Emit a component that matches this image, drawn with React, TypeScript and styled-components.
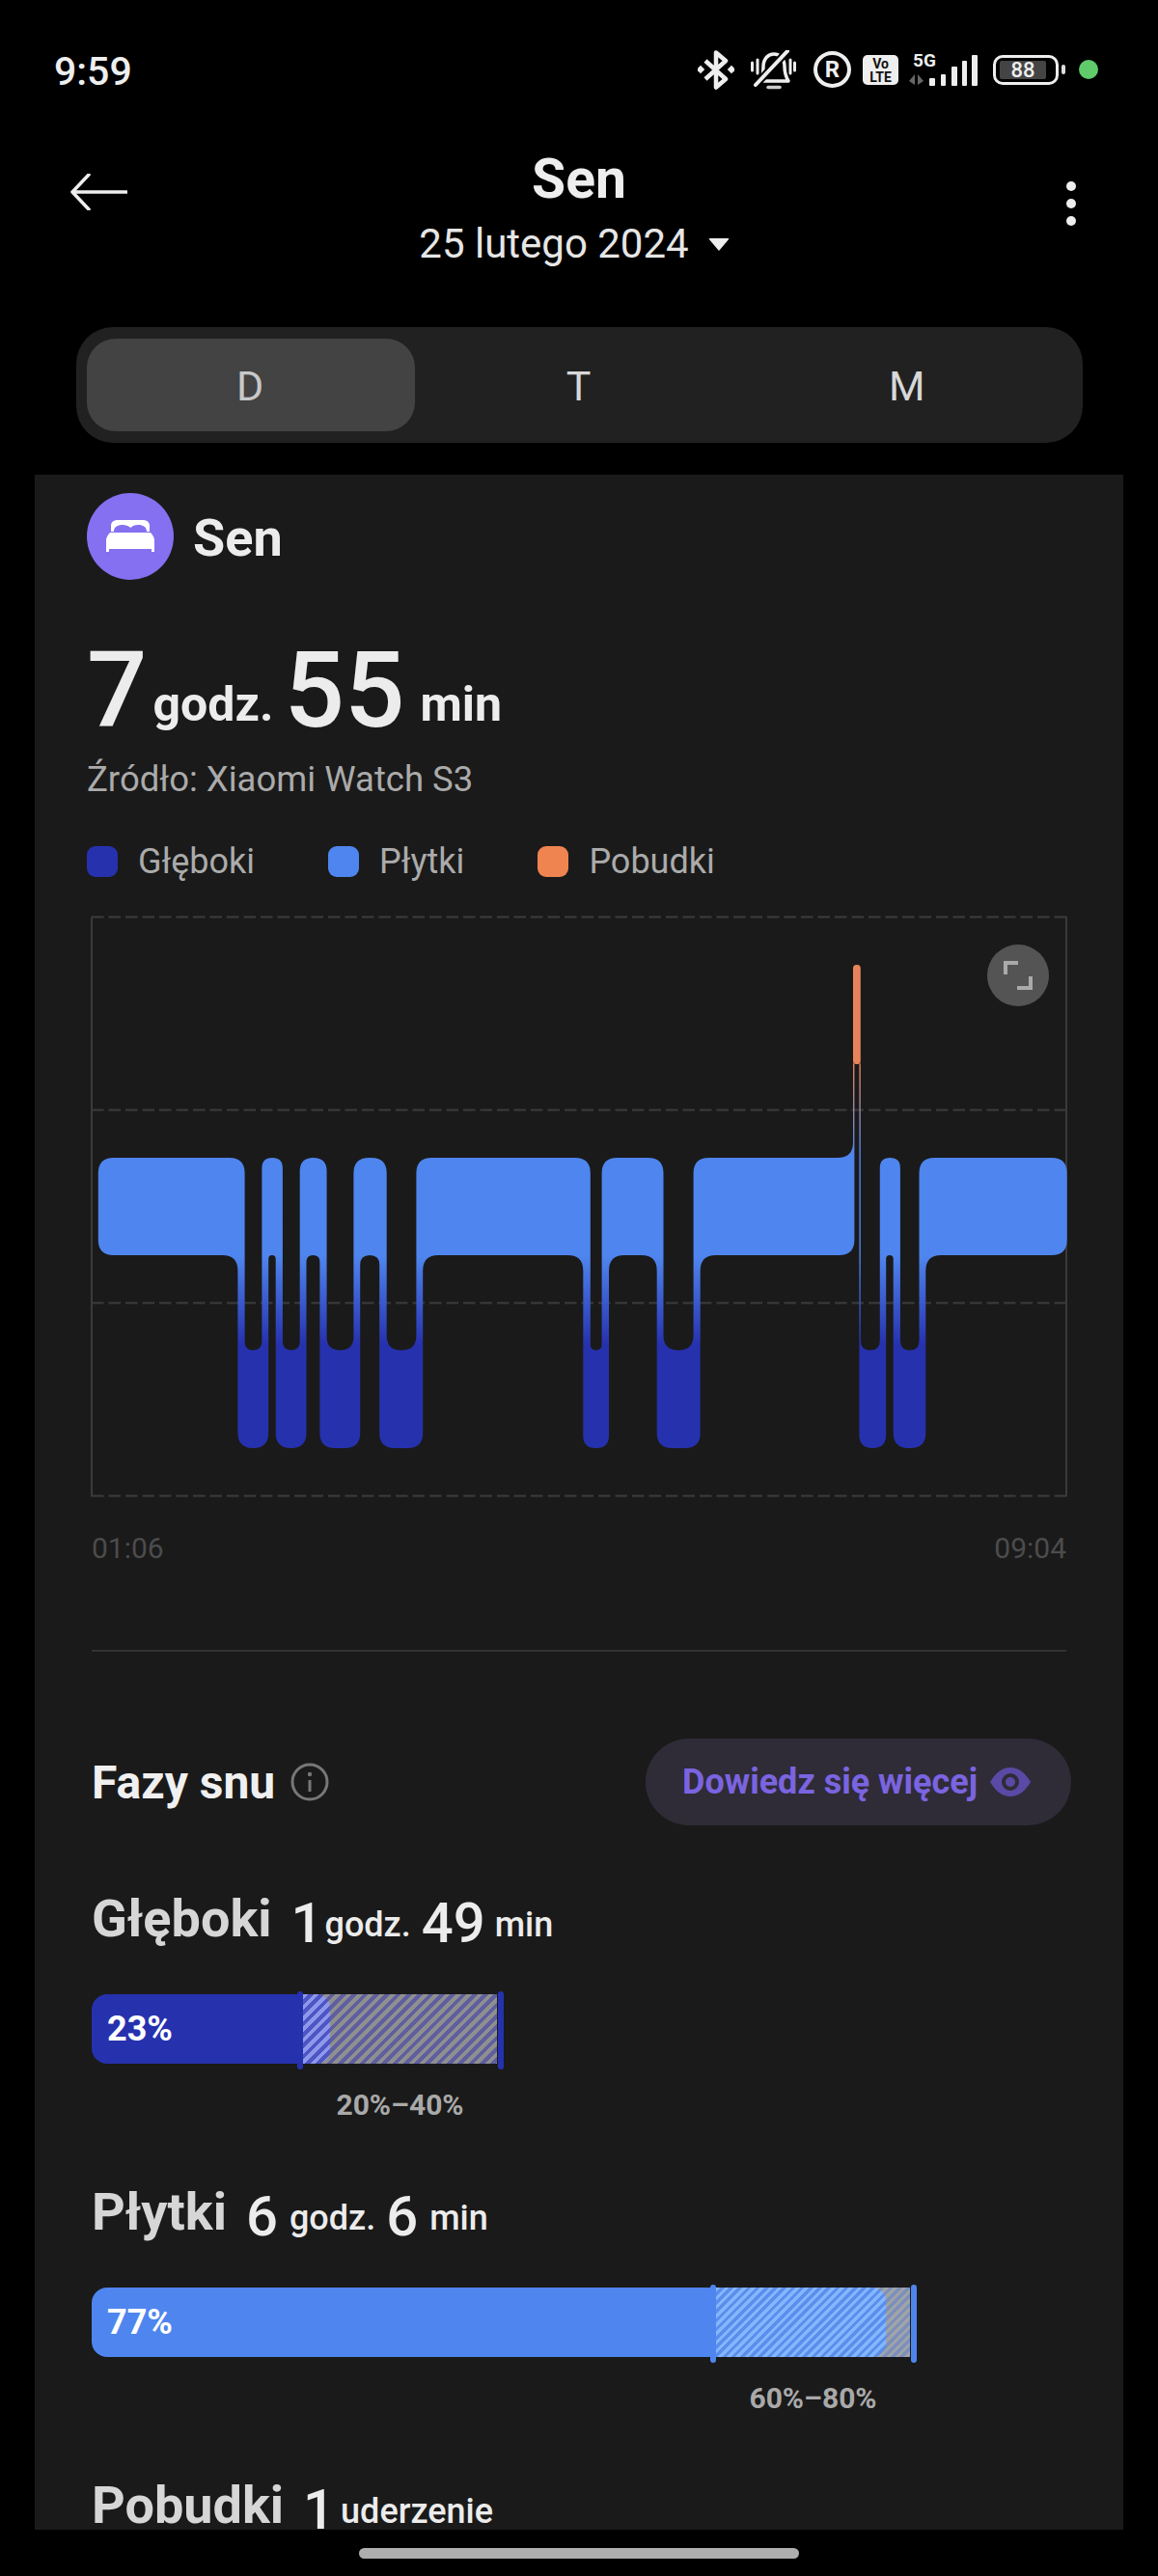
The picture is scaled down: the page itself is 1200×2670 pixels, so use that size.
import styled, { createGlobalStyle } from "styled-components"

const GlobalStyle = createGlobalStyle`
    html, body {
        margin: 0;
        background: #000;
        font-family: Roboto, "Noto Sans", sans-serif;
    }
`
const Page = styled.div`
    width: 1200px;
    height: 2670px;
    overflow: hidden;
    background: #000;
    color: #ececec;
`

/* status bar */
const StatusBar = styled.div`
    display: flex;
    align-items: center;
    height: 44px;
    padding: 50px 62px 0 56px;
`
const Clock = styled.div`
    padding-top: 3px;
    font-size: 41px;
    font-weight: 500;
    color: #eee;
    margin-right: auto;
`
const StatusSvg = styled.svg<{ $ml?: number }>`
    display: block;
    margin-left: ${p => p.$ml ?? 0}px;
`
const RoamBadge = styled.div`
    width: 39px;
    height: 38px;
    margin-left: 18px;
    box-sizing: border-box;
    border: 4px solid #eee;
    border-radius: 50%;
    font-size: 24px;
    font-weight: 700;
    line-height: 30px;
    text-align: center;
    color: #eee;
`
const VolteBadge = styled.div`
    width: 37px;
    height: 31px;
    margin-left: 12px;
    background: #eee;
    border-radius: 5px;
    color: #111;
    font-size: 14px;
    font-weight: 700;
    line-height: 14px;
    text-align: center;
    padding-top: 2px;
    box-sizing: border-box;
`
const SignalWrap = styled.div`
    position: relative;
    width: 72px;
    height: 33px;
    margin-left: 10px;
`
const FiveG = styled.span`
    position: absolute;
    left: 5px;
    top: -3px;
    font-size: 19px;
    font-weight: 700;
    line-height: 20px;
    color: #eee;
`
const Battery = styled.div`
    width: 68px;
    height: 31px;
    margin-left: 16px;
    box-sizing: border-box;
    border: 3px solid #eee;
    border-radius: 10px;
    padding: 3px 10px 3px 4px;
`
const BatteryFill = styled.div`
    height: 100%;
    background: #444;
    border-radius: 2px;
    font-size: 22px;
    font-weight: 500;
    line-height: 19px;
    text-align: center;
    color: #eee;
`
const BatteryTip = styled.div`
    width: 4px;
    height: 10px;
    margin-left: 3px;
    background: #ddd;
    border-radius: 2px;
`
const GreenDot = styled.div`
    width: 20px;
    height: 20px;
    margin-left: 14px;
    background: #5fcb6a;
    border-radius: 50%;
`

/* header */
const Header = styled.div`
    display: grid;
    grid-template-columns: 1fr auto 1fr;
    padding-top: 62px;
    margin-bottom: 61px;
`
const BackIcon = styled.svg`
    display: block;
    margin: 24px 0 0 72px;
`
const TitleBlock = styled.div`
    text-align: center;
`
const PageTitle = styled.div`
    font-size: 57px;
    font-weight: 700;
    line-height: 60px;
    color: #eee;
`
const DateRow = styled.div`
    display: flex;
    align-items: center;
    gap: 20px;
    margin: 12px 10px 0 0;
    font-size: 42px;
    line-height: 50px;
    color: #e6e6e6;
`
const DateCaret = styled.div`
    width: 0;
    height: 0;
    border-left: 11px solid transparent;
    border-right: 11px solid transparent;
    border-top: 13px solid #eee;
    border-radius: 2px;
`
const MoreIcon = styled.svg`
    display: block;
    justify-self: end;
    margin: 32px 85px 0 0;
`

/* day / week / month */
const Segmented = styled.div`
    display: grid;
    grid-template-columns: repeat(3, 1fr);
    height: 120px;
    margin: 0 78px 33px 79px;
    padding: 12px 11px;
    box-sizing: border-box;
    background: #212121;
    border-radius: 38px;
`
const Tab = styled.div<{ $active?: boolean }>`
    display: flex;
    align-items: center;
    justify-content: center;
    padding: 2px 2px 0 0;
    font-size: 43px;
    color: ${p => (p.$active ? "#c8c8c8" : "#d8d8d8")};
    background: ${p => (p.$active ? "#434343" : "transparent")};
    border-radius: 30px;
`

/* card */
const Card = styled.div`
    height: 2130px;
    margin: 0 36px;
    padding: 19px 54px 0;
    box-sizing: border-box;
    overflow: hidden;
    background: #1a1a1a;
`
const CardHead = styled.div`
    display: flex;
    align-items: center;
    gap: 20px;
    height: 90px;
`
const SleepBadge = styled.div`
    display: flex;
    align-items: center;
    justify-content: center;
    width: 90px;
    height: 90px;
    background: #8470f0;
    border-radius: 50%;
`
const CardTitle = styled.div`
    padding-top: 3px;
    font-size: 54px;
    font-weight: 700;
    color: #ececec;
`
const BigRow = styled.div`
    height: 110px;
    margin-top: 60px;
    font-size: 50px;
    font-weight: 700;
    line-height: 110px;
    color: #ececec;
`
const BigNumber = styled.span<{ $gap: number }>`
    font-size: 110px;
    font-weight: 500;
    line-height: 1;
    vertical-align: -6px;
    margin-right: ${p => p.$gap}px;
`
const BigUnit = styled.span`
    margin-right: 11px;
`
const Source = styled.div`
    margin-top: 15px;
    font-size: 36.5px;
    line-height: 44px;
    color: #ababab;
`
const Legend = styled.div`
    display: flex;
    gap: 76px;
    height: 40px;
    margin-top: 43px;
`
const LegendItem = styled.div`
    display: flex;
    align-items: center;
    gap: 21px;
    font-size: 36px;
    color: #ababab;
`
const Swatch = styled.div<{ $color: string }>`
    width: 32px;
    height: 32px;
    background: ${p => p.$color};
    border-radius: 9px;
`

/* chart */
const ChartWrap = styled.div`
    position: relative;
    margin-top: 33px;
    height: 610px;
`
const ExpandButton = styled.div`
    position: absolute;
    left: 933px;
    top: 33px;
    display: flex;
    align-items: center;
    justify-content: center;
    width: 64px;
    height: 64px;
    background: #545454;
    border-radius: 50%;
`
const TimeRow = styled.div`
    display: flex;
    justify-content: space-between;
    margin-top: 29px;
    padding: 0 5px;
    font-size: 30px;
    line-height: 40px;
    color: #4c4c4c;
`
const Divider = styled.div`
    height: 2px;
    margin: 85px 5px 0;
    background: #333;
`

/* phases */
const PhasesHead = styled.div`
    display: flex;
    align-items: center;
    height: 90px;
    margin-top: 90px;
    padding-left: 5px;
`
const PhasesTitle = styled.div`
    font-size: 48px;
    font-weight: 700;
    color: #f0f0f0;
`
const InfoIcon = styled.svg`
    display: block;
    margin-left: 16px;
    margin-right: auto;
`
const MoreButton = styled.div`
    display: flex;
    align-items: center;
    gap: 13px;
    width: 441px;
    height: 90px;
    padding-left: 38px;
    box-sizing: border-box;
    background: #2f2c38;
    border-radius: 45px;
    font-size: 36px;
    font-weight: 700;
    color: #7b64e0;
`
const Phase = styled.div<{ $first?: boolean }>`
    margin-top: ${p => (p.$first ? 67 : 61)}px;
    padding-left: 5px;
`
const PhaseHead = styled.div`
    height: 60px;
    font-size: 36px;
    font-weight: 500;
    line-height: 60px;
    color: #ececec;
    white-space: nowrap;
`
const PhaseName = styled.span`
    font-size: 54px;
    font-weight: 700;
    color: #d6d6d6;
    margin-right: 20px;
`
const PhaseNumber = styled.span<{ $gap: number }>`
    font-size: 58px;
    font-weight: 500;
    line-height: 1;
    vertical-align: -6px;
    margin-right: ${p => p.$gap}px;
`
const PhaseUnit = styled.span`
    margin-right: 11px;
`
const BarTrack = styled.div`
    display: flex;
    height: 72px;
    margin-top: 48px;
`
const BarSolid = styled.div<{ $width: number; $color: string }>`
    width: ${p => p.$width}px;
    padding-left: 16px;
    box-sizing: border-box;
    background: ${p => p.$color};
    border-radius: 16px 0 0 16px;
    font-size: 36px;
    font-weight: 700;
    line-height: 72px;
    color: #fff;
`
const RangeBand = styled.div<{ $stripeA: string; $stripeB: string; $size: number; $edge: string }>`
    position: relative;
    width: 201px;
    background: repeating-linear-gradient(
        135deg,
        ${p => p.$stripeA} 0 ${p => p.$size / 2}px,
        ${p => p.$stripeB} ${p => p.$size / 2}px ${p => p.$size}px
    );
    &::before, &::after {
        content: "";
        position: absolute;
        top: -3px;
        bottom: -6px;
        width: 6px;
        background: ${p => p.$edge};
        border-radius: 3px;
    }
    &::before { left: -6px; }
    &::after { right: -7px; }
`
const RangeFill = styled.div<{ $width: number; $stripeA: string; $stripeB: string; $size: number }>`
    position: absolute;
    left: 0;
    top: 0;
    bottom: 0;
    width: ${p => p.$width}px;
    border-radius: 0 14px 14px 0;
    background: repeating-linear-gradient(
        135deg,
        ${p => p.$stripeA} 0 ${p => p.$size / 2}px,
        ${p => p.$stripeB} ${p => p.$size / 2}px ${p => p.$size}px
    );
`
const RangeLabel = styled.div<{ $left: number }>`
    width: 201px;
    margin: 23px 0 0 ${p => p.$left}px;
    font-size: 30px;
    font-weight: 700;
    line-height: 40px;
    text-align: center;
    color: #a9a9a9;
`
const HomeBar = styled.div`
    width: 456px;
    height: 11px;
    margin: 19px auto 0;
    background: #aeaeae;
    border-radius: 6px;
`

// polygon with rounded corners, radius is clamped for the narrow gaps
const smooth = (pts: number[][], r = 16) => {
    let d = ""
    pts.forEach((p, i) => {
        const a = pts[(i + pts.length - 1) % pts.length]
        const b = pts[(i + 1) % pts.length]
        const la = Math.hypot(a[0] - p[0], a[1] - p[1])
        const lb = Math.hypot(b[0] - p[0], b[1] - p[1])
        const rr = Math.min(r, la / 2, lb / 2)
        const sx = p[0] + ((a[0] - p[0]) / la) * rr
        const sy = p[1] + ((a[1] - p[1]) / la) * rr
        const ex = p[0] + ((b[0] - p[0]) / lb) * rr
        const ey = p[1] + ((b[1] - p[1]) / lb) * rr
        d += `${i ? "L" : "M"}${sx.toFixed(1)} ${sy.toFixed(1)}Q${p[0]} ${p[1]} ${ex.toFixed(1)} ${ey.toFixed(1)}`
    })
    return d + "Z"
}

const TOP = 1200
const BAND = 1301
const NOTCH = 1399.5
const LOW = 1501

const upper = (blocks: number[][]) =>
    blocks.flatMap(([l, r], i) =>
        i < blocks.length - 1
            ? [[l, TOP], [r, TOP], [r, NOTCH], [blocks[i + 1][0], NOTCH]]
            : [[l, TOP], [r, TOP]]
    )
const lower = (columns: number[][]) =>
    columns.flatMap(([l, r]) => [[r, BAND], [r, LOW], [l, LOW], [l, BAND]])

const shapeLeft = smooth([
    ...upper([[101.8, 253.6], [271.4, 292.9], [310.7, 338.6], [366.4, 400.7], [431.4, 611.8], [623.6, 687.5], [718.6, 884]]),
    [884, 1102],
    [885.4, 1102],
    [885.4, BAND],
    ...lower([[680.7, 725.7], [604.3, 631], [393.2, 438.2], [331.4, 373.2], [285.7, 317.5], [246.4, 278.2]]),
    [101.8, BAND],
])
const shapeRight = smooth([
    [890.4, 1102],
    [891.8, 1102],
    [891.8, NOTCH],
    [911.8, NOTCH],
    ...upper([[911.8, 932.9], [952.5, 1105.7]]),
    [1105.7, BAND],
    ...lower([[925.7, 959.3]]),
    [918.2, BAND],
    [918.2, LOW],
    [890.4, LOW],
])

const gridLines = [950.5, 1150.5, 1350.5, 1550.5]

function SleepChart() {
    return (
        <svg width="1020" height="610" viewBox="90 946 1020 610" style={{ display: "block" }}>
            <defs>
                <linearGradient id="stage" gradientUnits="userSpaceOnUse" x1="0" y1="1000" x2="0" y2="1400">
                    <stop offset="0.255" stopColor="#e8835a" />
                    <stop offset="0.49" stopColor="#4f85ee" />
                    <stop offset="0.755" stopColor="#4f85ee" />
                    <stop offset="0.985" stopColor="#2631ae" />
                </linearGradient>
            </defs>
            {gridLines.map(y => (
                <line key={y} x1="95" x2="1105" y1={y} y2={y} stroke="#3c3c3c" strokeWidth="2" strokeDasharray="12.5 5" />
            ))}
            <line x1="95" x2="95" y1="950" y2="1551" stroke="#3a3a3a" strokeWidth="2" />
            <line x1="1105" x2="1105" y1="950" y2="1551" stroke="#3a3a3a" strokeWidth="2" />
            <path d={shapeLeft} fill="url(#stage)" />
            <path d={shapeRight} fill="url(#stage)" />
            <rect x="884" y="1000" width="7.8" height="103" rx="3.5" fill="#e8835a" />
        </svg>
    )
}

function Bar({ percent, solid, fill, color, stripes, fillStripes, size }: {
    percent: string
    solid: number
    fill: number
    color: string
    stripes: string[]
    fillStripes: string[]
    size: number
}) {
    return (
        <BarTrack>
            <BarSolid $width={solid} $color={color}>{percent}</BarSolid>
            <RangeBand $stripeA={stripes[0]} $stripeB={stripes[1]} $size={size} $edge={color}>
                <RangeFill $width={fill} $stripeA={fillStripes[0]} $stripeB={fillStripes[1]} $size={size} />
            </RangeBand>
        </BarTrack>
    )
}

export default function App() {
    return (
        <Page>
            <GlobalStyle />
            <StatusBar>
                <Clock>9:59</Clock>
                <StatusSvg width="38" height="41" viewBox="0 0 38 41">
                    <path d="M8 11 L29 30 L19 38.5 V2.5 L29 11 L8 30" fill="none" stroke="#eee" strokeWidth="4.5" strokeLinejoin="round" />
                    <rect x="0" y="17" width="6" height="6" transform="rotate(45 3 20)" fill="#eee" />
                    <rect x="32" y="17" width="6" height="6" transform="rotate(45 35 20)" fill="#eee" />
                </StatusSvg>
                <StatusSvg $ml={17} width="47" height="41" viewBox="0 0 47 41">
                    <path d="M10 32 C13 27 13 22 13 17 C13 9 18 4 24 4 C30 4 35 9 35 17 C35 23 36 27 39 32 Z" fill="none" stroke="#eee" strokeWidth="3.5" strokeLinejoin="round" />
                    <path d="M38 1 L5 36" stroke="#000" strokeWidth="8" />
                    <path d="M38 1 L5 36" stroke="#eee" strokeWidth="4" strokeLinecap="round" />
                    <path d="M18 38.5 H30" stroke="#ccc" strokeWidth="3.5" strokeLinecap="round" />
                    <path d="M1.5 13 V21 M7 10 V24 M41 10 V24 M45.5 13 V21" stroke="#eee" strokeWidth="3" strokeLinecap="round" />
                </StatusSvg>
                <RoamBadge>R</RoamBadge>
                <VolteBadge>Vo<br />LTE</VolteBadge>
                <SignalWrap>
                    <FiveG>5G</FiveG>
                    <StatusSvg width="72" height="33" viewBox="0 0 72 33">
                        <path d="M7 21 V32 L1 28 Z M10 21 V32 L16 28 Z" fill="#666" />
                        <rect x="22" y="25" width="6" height="8" rx="1" fill="#eee" />
                        <rect x="34" y="21" width="5" height="12" rx="1" fill="#eee" />
                        <rect x="45" y="13" width="6" height="20" rx="1" fill="#eee" />
                        <rect x="56" y="7" width="5" height="26" rx="1" fill="#eee" />
                        <rect x="66" y="1" width="6" height="32" rx="1" fill="#eee" />
                    </StatusSvg>
                </SignalWrap>
                <Battery><BatteryFill>88</BatteryFill></Battery>
                <BatteryTip />
                <GreenDot />
            </StatusBar>

            <Header>
                <BackIcon width="60" height="38" viewBox="0 0 60 38">
                    <path d="M59 19 H4 M20 1 L3 19 L20 37" fill="none" stroke="#eee" strokeWidth="3.5" strokeLinecap="round" strokeLinejoin="round" />
                </BackIcon>
                <TitleBlock>
                    <PageTitle>Sen</PageTitle>
                    <DateRow>25 lutego 2024<DateCaret /></DateRow>
                </TitleBlock>
                <MoreIcon width="10" height="46" viewBox="0 0 10 46">
                    <circle cx="5" cy="5" r="5" fill="#eee" />
                    <circle cx="5" cy="23" r="5" fill="#eee" />
                    <circle cx="5" cy="41" r="5" fill="#eee" />
                </MoreIcon>
            </Header>

            <Segmented>
                <Tab $active>D</Tab>
                <Tab>T</Tab>
                <Tab>M</Tab>
            </Segmented>

            <Card>
                <CardHead>
                    <SleepBadge>
                        <svg width="50" height="36" viewBox="0 0 50 36">
                            <path d="M5 13 V7 C5 3 8 1 12 1 H38 C42 1 45 3 45 7 V13 H42 C42 8 38 6 33 6 C30 6 27 7 25.5 9 C23 7 20 6 17 6 C12 6 8 8 8 13 Z" fill="#fff" />
                            <path d="M4 14 H46 C48 16 50 19 50 22 V34 H47 V31 H3 V34 H0 V22 C0 19 2 16 4 14 Z" fill="#fff" />
                        </svg>
                    </SleepBadge>
                    <CardTitle>Sen</CardTitle>
                </CardHead>

                <BigRow>
                    <BigNumber $gap={6}>7</BigNumber>
                    <BigUnit>godz.</BigUnit>
                    <BigNumber $gap={16}>55</BigNumber>
                    <span>min</span>
                </BigRow>
                <Source>Źródło: Xiaomi Watch S3</Source>
                <Legend>
                    <LegendItem><Swatch $color="#2631ae" />Głęboki</LegendItem>
                    <LegendItem><Swatch $color="#4f85ee" />Płytki</LegendItem>
                    <LegendItem><Swatch $color="#ef8450" />Pobudki</LegendItem>
                </Legend>

                <ChartWrap>
                    <SleepChart />
                    <ExpandButton>
                        <svg width="30" height="30" viewBox="0 0 30 30">
                            <path d="M2 14 V2 H15 M28 16 V28 H14" fill="none" stroke="#aaa" strokeWidth="4" />
                        </svg>
                    </ExpandButton>
                </ChartWrap>
                <TimeRow><span>01:06</span><span>09:04</span></TimeRow>
                <Divider />

                <PhasesHead>
                    <PhasesTitle>Fazy snu</PhasesTitle>
                    <InfoIcon width="40" height="40" viewBox="0 0 40 40">
                        <circle cx="20" cy="20" r="18" fill="none" stroke="#777" strokeWidth="3" />
                        <circle cx="20" cy="12" r="2.2" fill="#777" />
                        <path d="M20 18 V30" stroke="#777" strokeWidth="3" />
                    </InfoIcon>
                    <MoreButton>
                        Dowiedz się więcej
                        <svg width="42" height="30" viewBox="0 0 42 30">
                            <path d="M0 15 C6 5 13 0 21 0 C29 0 36 5 42 15 C36 25 29 30 21 30 C13 30 6 25 0 15 Z" fill="#5a4aa6" />
                            <circle cx="21" cy="15" r="9" fill="#2f2c38" />
                            <circle cx="21" cy="15" r="5" fill="#5a4aa6" />
                        </svg>
                    </MoreButton>
                </PhasesHead>

                <Phase $first>
                    <PhaseHead>
                        <PhaseName>Głęboki</PhaseName>
                        <PhaseNumber $gap={2}>1</PhaseNumber>
                        <PhaseUnit>godz.</PhaseUnit>
                        <PhaseNumber $gap={10}>49</PhaseNumber>
                        <PhaseUnit>min</PhaseUnit>
                    </PhaseHead>
                    <Bar percent="23%" solid={219} fill={28} color="#2631ae" stripes={["#8f8f8f", "#5f5fa0"]} fillStripes={["#8e98ea", "#4d56c4"]} size={8} />
                    <RangeLabel $left={219}>20%–40%</RangeLabel>
                </Phase>

                <Phase>
                    <PhaseHead>
                        <PhaseName>Płytki</PhaseName>
                        <PhaseNumber $gap={12}>6</PhaseNumber>
                        <PhaseUnit>godz.</PhaseUnit>
                        <PhaseNumber $gap={12}>6</PhaseNumber>
                        <PhaseUnit>min</PhaseUnit>
                    </PhaseHead>
                    <Bar percent="77%" solid={647} fill={176} color="#4f85ee" stripes={["#a0a3a8", "#7c90bb"]} fillStripes={["#84b6ff", "#5b8fec"]} size={6.5} />
                    <RangeLabel $left={647}>60%–80%</RangeLabel>
                </Phase>

                <Phase>
                    <PhaseHead>
                        <PhaseName>Pobudki</PhaseName>
                        <PhaseNumber $gap={6}>1</PhaseNumber>
                        <PhaseUnit>uderzenie</PhaseUnit>
                    </PhaseHead>
                </Phase>
            </Card>
            <HomeBar />
        </Page>
    )
}
